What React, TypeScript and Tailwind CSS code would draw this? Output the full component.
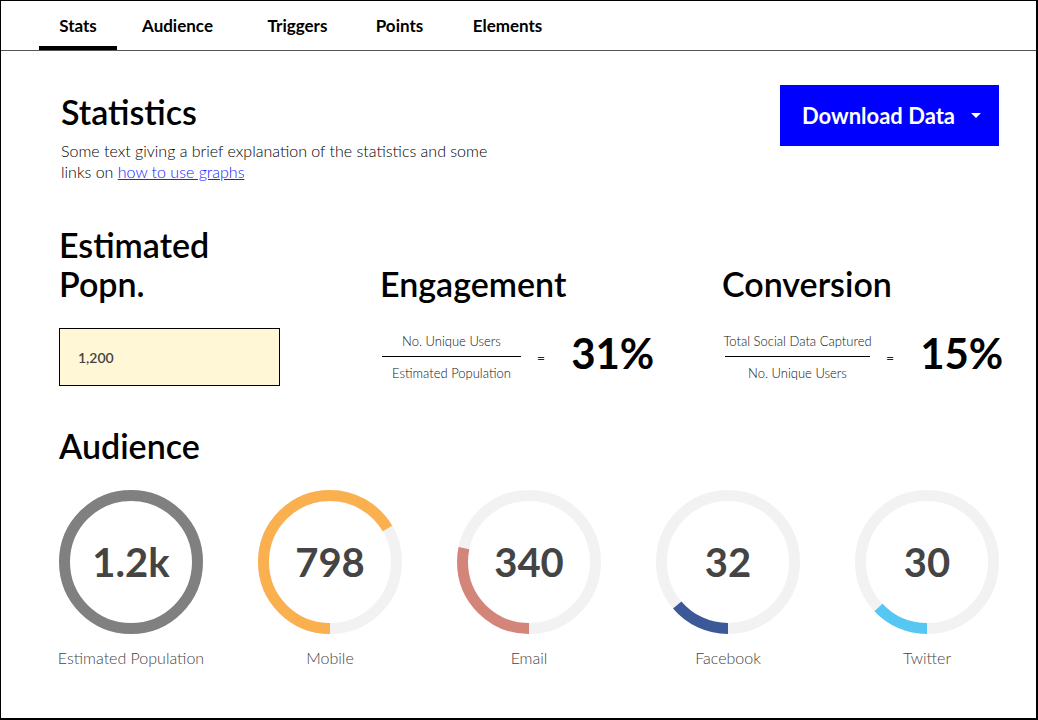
import React from "react";

const FONT = { fontFamily: "Lato, 'Noto Sans', sans-serif" };

function Ring({ value, label, color, fraction }: { value: string; label: string; color: string; fraction: number }) {
  const r = 66.5;
  const c = 2 * Math.PI * r;
  return (
    <div className="flex w-[144px] flex-col items-center">
      <div className="relative h-[144px] w-[144px]">
        <svg width="144" height="144" viewBox="0 0 144 144">
          <circle cx="72" cy="72" r={r} fill="none" stroke="#f2f2f2" strokeWidth="11" />
          <circle
            cx="72"
            cy="72"
            r={r}
            fill="none"
            stroke={color}
            strokeWidth="11"
            strokeDasharray={`${c * fraction} ${c}`}
            transform="rotate(90 72 72)"
          />
        </svg>
        <div className="absolute inset-0 flex items-center justify-center text-[40px] font-bold text-[#444]">
          {value}
        </div>
      </div>
      <div className="mt-[12px] whitespace-nowrap text-[16px] font-light text-[#444]">{label}</div>
    </div>
  );
}

function Fraction({ top, bottom, width, result }: { top: string; bottom: string; width: string; result: string }) {
  return (
    <div className="flex items-center">
      <div className={`flex flex-col items-center ${width}`}>
        <div className="whitespace-nowrap pb-[7px] text-[13px] font-light leading-[16px] text-[#111]">{top}</div>
        <div className="h-px w-full bg-black" />
        <div className="whitespace-nowrap pt-[8px] text-[13px] font-light leading-[16px] text-[#111]">{bottom}</div>
      </div>
      <div className="ml-[16px] text-[14px] text-[#222]">=</div>
      <div className="ml-[26px] mt-[-8px] text-[42px] font-bold leading-none text-black">{result}</div>
    </div>
  );
}

export default function App() {
  const tabs = [
    { name: "Stats", w: "w-[78px]", active: true },
    { name: "Audience", w: "w-[121px]" },
    { name: "Triggers", w: "w-[119px]" },
    { name: "Points", w: "w-[85px]" },
    { name: "Elements", w: "w-[131px]" },
  ];
  return (
    <div style={FONT} className="h-[720px] w-[1038px] overflow-hidden border-t border-l border-r-2 border-b-2 border-black bg-white">
      <nav className="flex h-[50px] border-b border-[#555] pl-[38px]">
        {tabs.map((t) => (
          <div
            key={t.name}
            className={`flex h-[49px] items-center justify-center border-b-4 pt-[4px] text-[17px] font-bold text-black ${t.w} ${
              t.active ? "border-black" : "border-transparent"
            }`}
          >
            {t.name}
          </div>
        ))}
      </nav>

      <main className="pl-[58px] pr-[37px]">
        <section className="flex justify-between pt-[41px]">
          <div className="pl-[2px]">
            <h1 className="text-[34px] font-semibold leading-[40px] text-black">Statistics</h1>
            <p className="mt-[8px] w-[440px] text-[16px] font-light leading-[21px] text-black">
              Some text giving a brief explanation of the statistics and some links on{" "}
              <a href="#" className="text-[#2020ff] underline">
                how to use graphs
              </a>
            </p>
          </div>
          <button className="mt-[-7px] flex h-[61px] w-[219px] items-center justify-center gap-[16px] bg-[#0000ff] pl-[4px] text-[22px] font-bold text-white">
            <span>Download Data</span>
            <svg width="10" height="5" viewBox="0 0 10 5">
              <path d="M0 0h10L5 5z" fill="white" />
            </svg>
          </button>
        </section>

        <section className="mt-[43px] grid grid-cols-[321px_342px_1fr] grid-rows-[auto_auto]">
          <h2 className="self-end text-[34px] font-semibold leading-[39px] text-black">
            Estimated
            <br />
            Popn.
          </h2>
          <h2 className="self-end text-[34px] font-semibold leading-[39px] text-black">Engagement</h2>
          <h2 className="self-end text-[34px] font-semibold leading-[39px] text-black">Conversion</h2>

          <div className="mt-[25px] flex h-[58px] w-[221px] items-center border border-black bg-[#fff7d6] pl-[18px] text-[14px] font-semibold text-[#444]">
            1,200
          </div>
          <div className="mt-[30px] flex items-center self-start pl-[2px]">
            <Fraction top="No. Unique Users" bottom="Estimated Population" width="w-[139px]" result="31%" />
          </div>
          <div className="mt-[30px] flex items-center self-start pl-[3px]">
            <Fraction top="Total Social Data Captured" bottom="No. Unique Users" width="w-[145px]" result="15%" />
          </div>
        </section>

        <section className="mt-[40px]">
          <h2 className="text-[34px] font-semibold leading-[40px] text-black">Audience</h2>
          <div className="mt-[24px] flex gap-[55px]">
            <Ring value="1.2k" label="Estimated Population" color="#808080" fraction={1} />
            <Ring value="798" label="Mobile" color="#fbb050" fraction={0.665} />
            <Ring value="340" label="Email" color="#d4857a" fraction={0.283} />
            <Ring value="32" label="Facebook" color="#3b5998" fraction={0.138} />
            <Ring value="30" label="Twitter" color="#56c6f2" fraction={0.13} />
          </div>
        </section>
      </main>
    </div>
  );
}
